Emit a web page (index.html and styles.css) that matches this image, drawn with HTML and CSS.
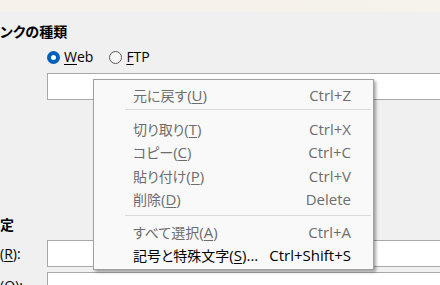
FILE: index.html
```html
<!DOCTYPE html>
<html lang="ja">
<head>
<meta charset="utf-8">
<link rel="stylesheet" href="styles.css">
</head>
<body>
<div class="band"></div>
<div class="page">
  <div class="heading"><span class="ja">ンクの種類</span></div>
  <div class="radios">
    <label class="radio"><span class="dot on"></span><span><u>W</u>eb</span></label>
    <label class="radio"><span class="dot"></span><span><u>F</u>TP</span></label>
  </div>
  <div class="field-row first"><div class="field"></div></div>
  <div class="heading2"><span class="ja">定</span></div>
  <div class="field-row"><div class="lbl">(<u>R</u>):</div><div class="field"></div></div>
  <div class="field-row tight"><div class="lbl">(<u>O</u>):</div><div class="field"></div></div>
</div>

<div class="menu">
  <div class="item dis"><span><span class="ja">元に戻す</span>(<u>U</u>)</span><span>Ctrl+Z</span></div>
  <div class="sep s1"></div>
  <div class="item dis"><span><span class="ja">切り取り</span>(<u>T</u>)</span><span>Ctrl+X</span></div>
  <div class="item dis"><span><span class="ja">コピー</span>(<u>C</u>)</span><span>Ctrl+C</span></div>
  <div class="item dis"><span><span class="ja">貼り付け</span>(<u>P</u>)</span><span>Ctrl+V</span></div>
  <div class="item dis"><span><span class="ja">削除</span>(<u>D</u>)</span><span>Delete</span></div>
  <div class="sep s2"></div>
  <div class="item dis"><span><span class="ja">すべて選択</span>(<u>A</u>)</span><span>Ctrl+A</span></div>
  <div class="item"><span><span class="ja">記号と特殊文字</span>(<u>S</u>)...</span><span>Ctrl+Shift+S</span></div>
</div>
</body>
</html>
```
FILE: styles.css
```css
html, body {
  margin: 0;
  padding: 0;
  width: 440px;
  height: 285px;
  overflow: hidden;
  background: #f0f0f0;
  font-family: "Open Sans", "Noto Sans CJK JP", sans-serif;
  color: #000;
}
.ja {
  font-family: "Noto Sans CJK JP", sans-serif;
  font-feature-settings: "palt";
}
u {
  text-decoration-thickness: 1px;
  text-underline-offset: 2px;
}
.band {
  height: 12px;
  background: linear-gradient(to right, #f7f1ec, #f5f3ea);
}
.page {
  position: relative;
}
.heading {
  margin-top: 9px;
  height: 20px;
  line-height: 20px;
  font-size: 14px;
  font-weight: bold;
}
.radios {
  margin-top: 6px;
  height: 20px;
  padding-left: 47px;
  display: flex;
  align-items: center;
  gap: 16px;
  font-size: 14px;
}
.radio {
  display: flex;
  align-items: center;
  gap: 4px;
  line-height: 20px;
}
.dot {
  width: 11px;
  height: 11px;
  border-radius: 50%;
  border: 1px solid #5a5a5a;
  background: #f8f8f8;
  box-sizing: content-box;
}
.dot.on {
  border: 4px solid #005fb8;
  width: 5px;
  height: 5px;
  background: #fff;
}
.field-row {
  display: flex;
  align-items: center;
  margin-top: 6px;
}
.field-row.first {
  margin-top: 6px;
  padding-left: 47px;
}
.field-row.tight {
  margin-top: 5px;
}
.field {
  width: 420px;
  height: 25px;
  background: #fff;
  border: 1px solid #a8a8a8;
  flex-shrink: 0;
}
.lbl {
  width: 47px;
  flex-shrink: 0;
  font-size: 14px;
  line-height: 20px;
}
.heading2 {
  margin-top: 114px;
  height: 20px;
  line-height: 20px;
  font-size: 14px;
  font-weight: bold;
}
.menu {
  position: absolute;
  left: 93px;
  top: 79px;
  width: 281px;
  box-sizing: border-box;
  background: #f9f9f9;
  border: 1px solid #a0a0a0;
  box-shadow: 2px 2px 3px rgba(0, 0, 0, 0.35);
  padding: 3px 0 2px 0;
  font-size: 15px;
}
.item {
  display: flex;
  justify-content: space-between;
  align-items: center;
  height: 23.5px;
  padding: 0 22px 0 39px;
  white-space: nowrap;
}
.item .ja {
  font-size: 14px;
}
.item.dis {
  color: #6d6d6d;
}
.sep {
  margin: 0 2px 0 31px;
  border-top: 1px solid #d9d9d9;
}
.sep.s1 {
  margin-top: 2.5px;
  margin-bottom: 7px;
}
.sep.s2 {
  margin-top: 3.5px;
  margin-bottom: 4.5px;
}
```
